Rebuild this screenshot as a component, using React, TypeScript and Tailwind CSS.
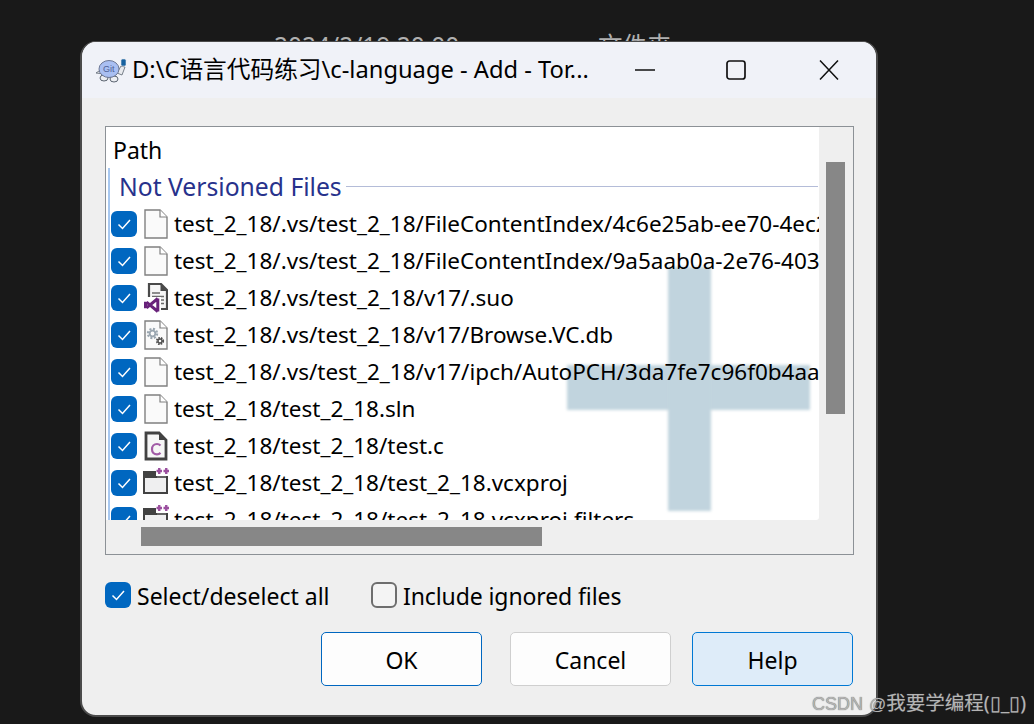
import type { ReactNode } from 'react'

const uiFont = { fontFamily: '"Noto Sans", "Noto Sans CJK SC", sans-serif' }

const Check = () => (
  <svg viewBox="0 0 26 26" className="w-[26px] h-[26px]" fill="none">
    <path d="M7.5 13.5l4 4 7.5-8.5" stroke="white" strokeWidth="1.5" />
  </svg>
)

const Checkbox = ({ checked = true }: { checked?: boolean }) =>
  checked ? (
    <span className="block shrink-0 w-[26px] h-[26px] rounded-[6px] bg-[#0067c0]">
      <Check />
    </span>
  ) : (
    <span className="block shrink-0 w-[26px] h-[26px] rounded-[6px] border-2 border-[#6e6e6e] bg-[#f4f4f4]" />
  )

const BlankFile = ({ children }: { children?: ReactNode }) => (
  <svg viewBox="0 0 24 30" className="w-[24px] h-[30px]">
    <path d="M1 1h15l7 7v21H1z" fill="#fafafa" stroke="#808080" strokeWidth="1.4" />
    <path d="M16 1v7h7" fill="#fff" stroke="#808080" strokeWidth="1.2" />
    {children}
  </svg>
)

const GearFile = () => (
  <BlankFile>
    <circle cx="8.500" cy="13.500" r="4.600" fill="none" stroke="#9aa6b0" strokeWidth="2.200" strokeDasharray="2 1.600" />
    <circle cx="8.500" cy="13.500" r="2.800" fill="none" stroke="#9aa6b0" strokeWidth="1.800" />
    <circle cx="16" cy="21" r="3.200" fill="none" stroke="#4f4f4f" strokeWidth="1.800" strokeDasharray="1.600 1" />
    <circle cx="16" cy="21" r="2" fill="none" stroke="#4f4f4f" strokeWidth="1.400" />
  </BlankFile>
)

const VsFile = () => (
  <svg viewBox="0 0 26 30" className="w-[26px] h-[30px]">
    <path d="M7 1h12l6 6v19H7z" fill="#f6f6f6" stroke="#4a4a4a" strokeWidth="2.200" />
    <path d="M18.500 1v7h6.500" fill="#4a4a4a" />
    <path d="M10 10h8M10 13.500h12M10 17h12M19 20.500h3" stroke="#6b6b6b" strokeWidth="1.300" />
    <path d="M1 14h18v16H1z" fill="#fff" />
    <path d="M15.800 15.500v13M15.800 15.500L4.500 24.800M15.800 28.500L4.500 19.200M3.500 18.800v6.400" fill="none" stroke="#68217a" strokeWidth="3" />
  </svg>
)

const CFile = () => (
  <svg viewBox="0 0 24 30" className="w-[24px] h-[30px]">
    <path d="M2 2h13l7 7v19H2z" fill="#f6f6f6" stroke="#424242" strokeWidth="2.800" />
    <path d="M15 2v7h7" fill="#424242" />
    <path d="M16.500 14.500c-1-1-2.200-1.500-3.500-1.500-3 0-5 2.200-5 5.200s2 5.200 5 5.200c1.300 0 2.500-.5 3.500-1.500" fill="none" stroke="#a15ba6" strokeWidth="2.200" />
  </svg>
)

const ProjectFile = () => (
  <svg viewBox="0 0 28 30" className="w-[28px] h-[30px] -mr-[2px]">
    <path d="M2 4h23v21H2z" fill="#efeff0" stroke="#424242" strokeWidth="2" />
    <rect x="1" y="3" width="14" height="7" fill="#424242" />
    <rect x="14" y="0" width="14" height="8" fill="#fff" />
    <path d="M14 9h12" stroke="#424242" strokeWidth="1.600" />
    <path d="M14.500 3h5.500M17.250 0v6M21.500 3h5.500M24.250 0v6" stroke="#9b4f9f" strokeWidth="2.400" />
  </svg>
)

const Tortoise = () => (
  <svg viewBox="0 0 32 26" className="w-[32px] h-[26px]">
    <path d="M1 16l6-4 2 5z" fill="#e4e6ea" stroke="#5b6470" strokeWidth="0.8" />
    <ellipse cx="9" cy="21" rx="4" ry="3" fill="#eceef2" stroke="#5b6470" strokeWidth="1" />
    <ellipse cx="19" cy="22" rx="4" ry="3" fill="#eceef2" stroke="#5b6470" strokeWidth="1" />
    <path d="M22 16l4-7 4 1-3 8z" fill="#e8eaee" stroke="#5b6470" strokeWidth="0.8" />
    <ellipse cx="14" cy="12" rx="10" ry="8.500" fill="#a9bff2" stroke="#6d7895" strokeWidth="1" />
    <text x="8" y="15" fontSize="9" fill="#4f6196" fontFamily='"Liberation Sans", sans-serif'>Git</text>
    <rect x="26" y="2" width="5" height="7" rx="1.500" fill="#16619f" stroke="#e8eaee" strokeWidth="0.6" />
  </svg>
)

const rows: { path: string; icon: ReactNode }[] = [
  { path: 'test_2_18/.vs/test_2_18/FileContentIndex/4c6e25ab-ee70-4ec2-9b1d.vsidx', icon: <BlankFile /> },
  { path: 'test_2_18/.vs/test_2_18/FileContentIndex/9a5aab0a-2e76-4031-a7c4.vsidx', icon: <BlankFile /> },
  { path: 'test_2_18/.vs/test_2_18/v17/.suo', icon: <VsFile /> },
  { path: 'test_2_18/.vs/test_2_18/v17/Browse.VC.db', icon: <GearFile /> },
  { path: 'test_2_18/.vs/test_2_18/v17/ipch/AutoPCH/3da7fe7c96f0b4aa/TEST.ipch', icon: <BlankFile /> },
  { path: 'test_2_18/test_2_18.sln', icon: <BlankFile /> },
  { path: 'test_2_18/test_2_18/test.c', icon: <CFile /> },
  { path: 'test_2_18/test_2_18/test_2_18.vcxproj', icon: <ProjectFile /> },
  { path: 'test_2_18/test_2_18/test_2_18.vcxproj.filters', icon: <ProjectFile /> },
]

const DialogButton = ({ label, className }: { label: string; className: string }) => (
  <button className={`w-[161px] h-[54px] pt-[2px] rounded-[5px] border text-[23px] text-black ${className}`}>{label}</button>
)

export default function App() {
  return (
    <div className="relative w-[1034px] h-[724px] overflow-hidden bg-[#191919]" style={uiFont}>
      {/* file listing behind the dialog, only its top edge shows */}
      <div className="h-[41px] overflow-hidden flex pl-[274px] pt-[34px] text-[24.500px] leading-[24px] text-[#b0b0b0]">
        <span className="w-[324px]">2024/2/19 20:00</span>
        <span>文件夹</span>
      </div>

      <div className="ml-[80px] w-[798px] h-[676px] flex flex-col rounded-[16px] border-2 border-t border-[#4b4b4b] overflow-hidden bg-[#efefef]">
        <div className="h-[56px] shrink-0 flex items-center bg-[#f0f2f8] pl-[13px]">
          <Tortoise />
          <span className="ml-[5px] w-[460px] text-[23.7px] whitespace-nowrap text-black">
            D:\C语言代码练习\c-language - Add - Tor...
          </span>
          <div className="ml-[43px] flex items-center">
            <svg viewBox="0 0 20 20" className="w-[20px] h-[20px]">
              <path d="M0 10h20" stroke="#111" strokeWidth="1.700" />
            </svg>
            <svg viewBox="0 0 20 20" className="ml-[71px] w-[20px] h-[20px]">
              <rect x="1" y="1" width="18" height="18" rx="2.500" fill="none" stroke="#111" strokeWidth="1.700" />
            </svg>
            <svg viewBox="0 0 20 20" className="ml-[73px] w-[20px] h-[20px]">
              <path d="M1 0.500l18 19M19 0.500l-18 19" stroke="#111" strokeWidth="1.500" />
            </svg>
          </div>
        </div>

        <div className="flex-1 flex flex-col px-[23px] pt-[28px]">
          <div className="w-[749px] h-[429px] border border-[#8c9196] grid grid-cols-[713px_1fr] grid-rows-[393px_1fr]">
            <div className="relative overflow-hidden bg-white rounded-br-[3px]">
              <div className="absolute left-[461px] top-[238px] w-[243px] h-[45px] bg-[#c1d4de] blur-[1.5px]" />
              <div className="absolute left-[562px] top-[140px] w-[43px] h-[244px] bg-[#c1d4de] blur-[1.5px]" />
              <div className="relative">
                <div className="h-[41px] pl-[7px] pt-[5px] text-[23px] leading-[36px] text-black">Path</div>
                <div className="ml-[2px] border-l-2 border-[#a8c8f0]">
                  <div className="h-[37px] flex items-center pl-[9px] pr-[1px]">
                    <span className="text-[24.7px] leading-[36px] text-[#27328c] whitespace-nowrap">Not Versioned Files</span>
                    <span className="flex-1 ml-[4px] h-px bg-[#b4bcd8]" />
                  </div>
                  {rows.map((r) => (
                    <div key={r.path} className="h-[37px] flex items-center -ml-[1px] pl-[2px] whitespace-nowrap">
                      <Checkbox />
                      <span className="w-[37px] h-[30px] flex justify-end pr-[6px] shrink-0">{r.icon}</span>
                      <span className="text-[22.5px] leading-[36px] text-black">{r.path}</span>
                    </div>
                  ))}
                </div>
              </div>
            </div>

            <div className="bg-[#efefef] pl-[7px] pt-[35px]">
              <div className="w-[19px] h-[252px] bg-[#878787]" />
            </div>
            <div className="bg-[#efefef] pl-[35px] pt-[7px]">
              <div className="w-[401px] h-[19px] bg-[#878787]" />
            </div>
            <div className="bg-[#efefef]" />
          </div>

          <div className="mt-[27px] h-[26px] flex items-center text-[23px] leading-[26px] text-black">
            <Checkbox />
            <span className="ml-[6px] w-[234px] mt-[2px]">Select/deselect all</span>
            <Checkbox checked={false} />
            <span className="ml-[6px] mt-[2px] tracking-[-0.1px]">Include ignored files</span>
          </div>

          <div className="mt-[24px] w-[748px] flex justify-end">
            <DialogButton label="OK" className="bg-[#fdfdfd] border-[#0067c0]" />
            <DialogButton label="Cancel" className="ml-[28px] bg-[#fdfdfd] border-[#cfcfcf]" />
            <DialogButton label="Help" className="ml-[21px] bg-[#deecf9] border-[#0078d4]" />
          </div>
        </div>
      </div>

      {/* site watermark across the corner */}
      <div className="absolute left-[812px] top-[690px] text-[19.500px] leading-[26px] whitespace-nowrap text-[#b4b4b4] [text-shadow:0_0_1px_#555]">
        <span className="text-[18px] mr-[6px]" style={{ fontFamily: '"Liberation Sans", sans-serif' }}>CSDN</span>
        <span className="text-[17px]" style={{ fontFamily: '"Liberation Sans", sans-serif' }}>@</span>
        我要学编程(▯_▯)
      </div>
    </div>
  )
}
